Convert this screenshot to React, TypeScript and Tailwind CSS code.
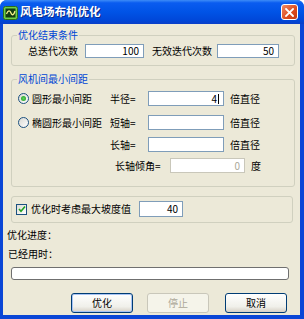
import type { ReactNode } from "react";

function Field({ className, children }: { className: string; children?: ReactNode }) {
  return (
    <div
      className={
        "flex items-center justify-end border border-[#7f9db9] bg-white pr-[4px] text-[10px] leading-none " +
        className
      }
    >
      {children}
    </div>
  );
}

function Radio({ on }: { on?: boolean }) {
  return (
    <span className="flex h-[11px] w-[11px] shrink-0 items-center justify-center rounded-full border border-[#1c5180] bg-[linear-gradient(135deg,#d8d8d2,#ffffff)]">
      {on && <span className="h-[5px] w-[5px] rounded-full bg-[radial-gradient(circle,#5ed35e,#1f9a1f)]" />}
    </span>
  );
}

function Btn({ label, off, main }: { label: string; off?: boolean; main?: boolean }) {
  return (
    <div
      className={
        "flex h-[20px] w-[62px] items-center justify-center rounded-[3px] border text-[10px] " +
        (off
          ? "border-[#c9c7ba] bg-[#f5f4ea] text-[#aca899]"
          : "border-[#003c74] bg-[linear-gradient(#ffffff,#f0f0ea_70%,#d6d0c5)] text-black") +
        (main ? " shadow-[inset_0_0_0_1px_#a8c4f4]" : "")
      }
    >
      {label}
    </div>
  );
}

export default function App() {
  return (
    <div className="flex h-[319px] w-[304px] flex-col overflow-hidden rounded-t-[7px] bg-[#0a46d6] font-['Noto_Sans_CJK_SC','Noto_Sans',sans-serif] text-black">
      {/* title bar */}
      <div className="flex h-[24px] items-center bg-[linear-gradient(#3d8cf7,#0a5cf0_12%,#0053e6_50%,#0047d8_85%,#0a3fc8)] pl-[3px] pr-[6px]">
        <svg width="15" height="14" viewBox="0 0 15 14" className="mt-[1px]">
          <rect x="0.5" y="0.5" width="14" height="13" rx="2" fill="#6fcf4a" stroke="#2c6e1c" />
          <rect x="2.5" y="2.5" width="10" height="9" fill="#123d12" />
          <path d="M3.5 8 C5 4, 7 4, 8 7 S11 9, 12 5" stroke="#f4f08a" strokeWidth="1.3" fill="none" />
        </svg>
        <span className="ml-[2px] text-[11.5px] font-bold leading-none text-white [text-shadow:1px_1px_#0b2a8a]">
          风电场布机优化
        </span>
        <div className="ml-auto flex h-[16px] w-[17px] items-center justify-center rounded-[3px] border border-white bg-[linear-gradient(135deg,#f08a66,#dc4a1c_60%,#c23a12)]">
          <svg width="9" height="9" viewBox="0 0 9 9">
            <path d="M1 1 L8 8 M8 1 L1 8" stroke="white" strokeWidth="1.8" strokeLinecap="square" />
          </svg>
        </div>
      </div>

      {/* body */}
      <div className="ml-[3px] mr-[4px] mb-[4px] flex flex-1 flex-col bg-[#ece9d8] text-[10px] leading-[12px]">
        {/* group 1 */}
        <fieldset className="ml-[8px] mt-[5px] h-[37px] w-[284px] rounded-[3px] border border-[#d0d0bf]">
          <legend className="ml-[5px] px-[1px] text-[10px] leading-[12px] text-[#0046d5]">优化结束条件</legend>
          <div className="mt-[2px] flex h-[15px] items-center pl-[16px]">
            <span className="w-[50px]">总迭代次数</span>
            <Field className="ml-[7px] h-[14px] w-[59px]">100</Field>
            <span className="ml-[8px] w-[61px]">无效迭代次数</span>
            <Field className="ml-[4px] h-[14px] w-[62px]">50</Field>
          </div>
        </fieldset>

        {/* group 2 */}
        <fieldset className="ml-[8px] mt-[7px] h-[114px] w-[284px] rounded-[3px] border border-[#d0d0bf]">
          <legend className="ml-[5px] px-[1px] text-[10px] leading-[12px] text-[#0046d5]">风机间最小间距</legend>
          <div className="mt-[6px] flex h-[15px] items-center">
            <div className="flex w-[98px] items-center gap-[3px] pl-[6px]">
              <Radio on />
              <span>圆形最小间距</span>
            </div>
            <span className="w-[38px]">半径=</span>
            <Field className="h-[15px] w-[76px]">
              <span>4</span>
              <span className="ml-[1px] h-[10px] w-[1px] bg-black" />
            </Field>
            <span className="ml-[6px]">倍直径</span>
          </div>
          <div className="mt-[9px] flex h-[15px] items-center">
            <div className="flex w-[98px] items-center gap-[3px] pl-[6px]">
              <Radio />
              <span>椭圆形最小间距</span>
            </div>
            <span className="w-[38px]">短轴=</span>
            <Field className="h-[15px] w-[76px]" />
            <span className="ml-[6px]">倍直径</span>
          </div>
          <div className="mt-[7px] flex h-[15px] items-center">
            <div className="w-[98px]" />
            <span className="w-[38px]">长轴=</span>
            <Field className="h-[15px] w-[76px]" />
            <span className="ml-[6px]">倍直径</span>
          </div>
          <div className="mt-[6px] flex h-[15px] items-center">
            <div className="w-[103px]" />
            <span className="w-[55px]">长轴倾角=</span>
            <Field className="h-[15px] w-[75px] border-[#c9c7ba] text-[#aca899]">0</Field>
            <span className="ml-[6px]">度</span>
          </div>
        </fieldset>

        {/* group 3 */}
        <fieldset className="ml-[8px] mt-[9px] h-[27px] w-[282px] rounded-[3px] border border-[#d0d0bf]">
          <div className="mt-[4px] flex h-[16px] items-center pl-[4px]">
            <span className="flex h-[11px] w-[11px] items-center justify-center border border-[#1c5180] bg-[linear-gradient(135deg,#dcdcd4,#ffffff)]">
              <svg width="8" height="8" viewBox="0 0 8 8">
                <path d="M1 4 L3 6.2 L7 1.5" stroke="#21a121" strokeWidth="1.6" fill="none" />
              </svg>
            </span>
            <span className="ml-[4px] w-[104px]">优化时考虑最大坡度值</span>
            <Field className="ml-[4px] h-[16px] w-[44px]">40</Field>
          </div>
        </fieldset>

        <div className="ml-[4px] mt-[6px]">优化进度：</div>
        <div className="ml-[5px] mt-[7px]">已经用时：</div>
        <div className="ml-[8px] mt-[7px] h-[13px] w-[278px] rounded-[3px] border border-[#6f6f6f] bg-white" />

        <div className="ml-[68px] mt-[13px] flex gap-[14px]">
          <Btn label="优化" main />
          <Btn label="停止" off />
          <div className="ml-[2px]">
            <Btn label="取消" />
          </div>
        </div>
      </div>
    </div>
  );
}
